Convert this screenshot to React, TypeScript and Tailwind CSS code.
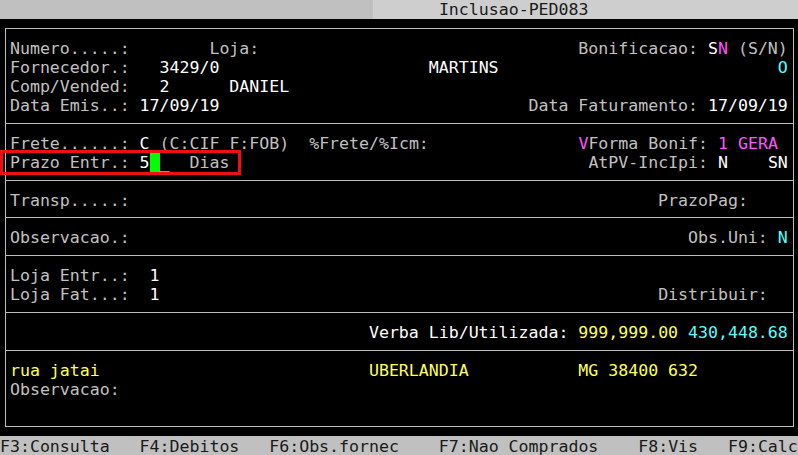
import React from "react";

type Seg = { col: number; text: string; cls: string };

const L = "text-[#c0c0c0]";
const W = "text-white";
const M = "text-[#ff55ff]";
const C = "text-[#55ffff]";
const Y = "text-[#ffff55]";
const K = "text-[#1a1a1a]";

function build(segs: Seg[], start: number) {
  const out: React.ReactNode[] = [];
  let cur = start;
  segs.forEach((s, i) => {
    if (s.col > cur) {
      out.push(<span key={"s" + i}>{" ".repeat(s.col - cur)}</span>);
      cur = s.col;
    }
    out.push(
      <span key={"t" + i} className={s.cls}>
        {s.text}
      </span>
    );
    cur += s.text.length;
  });
  return out;
}

const rowCls =
  "h-[18.958px] leading-[22px] whitespace-pre text-[16.6px] tracking-[-0.019px] font-['DejaVu_Sans_Mono',monospace]";

function TextRow({ segs }: { segs: Seg[] }) {
  return <div className={rowCls + " pl-[4.475px]"}>{build(segs, 1)}</div>;
}

function Sep() {
  return (
    <div className="h-[18.958px] flex items-center">
      <div className="h-px w-full bg-[#bdbdbd]" />
    </div>
  );
}

const rows: (Seg[] | "sep")[] = [
  [
    { col: 1, text: "Numero.....:", cls: L },
    { col: 21, text: "Loja:", cls: L },
    { col: 58, text: "Bonificacao:", cls: L },
    { col: 71, text: "S", cls: W },
    { col: 72, text: "N", cls: M },
    { col: 74, text: "(S/N)", cls: L },
  ],
  [
    { col: 1, text: "Fornecedor.:", cls: L },
    { col: 16, text: "3429/0", cls: W },
    { col: 43, text: "MARTINS", cls: W },
    { col: 78, text: "O", cls: C },
  ],
  [
    { col: 1, text: "Comp/Vended:", cls: L },
    { col: 16, text: "2", cls: W },
    { col: 23, text: "DANIEL", cls: W },
  ],
  [
    { col: 1, text: "Data Emis..:", cls: L },
    { col: 14, text: "17/09/19", cls: W },
    { col: 53, text: "Data Faturamento:", cls: L },
    { col: 71, text: "17/09/19", cls: W },
  ],
  "sep",
  [
    { col: 1, text: "Frete......:", cls: L },
    { col: 14, text: "C", cls: W },
    { col: 16, text: "(C:CIF F:FOB)", cls: L },
    { col: 31, text: "%Frete/%Icm:", cls: L },
    { col: 58, text: "V", cls: M },
    { col: 59, text: "Forma Bonif:", cls: L },
    { col: 72, text: "1 GERA", cls: M },
  ],
  [
    { col: 1, text: "Prazo Entr.:", cls: L },
    { col: 14, text: "5", cls: W },
    { col: 15, text: " ", cls: "bg-[#00ff00]" },
    { col: 16, text: "_", cls: W },
    { col: 19, text: "Dias", cls: L },
    { col: 59, text: "AtPV-IncIpi:", cls: L },
    { col: 72, text: "N", cls: W },
    { col: 77, text: "SN", cls: W },
  ],
  "sep",
  [
    { col: 1, text: "Transp.....:", cls: L },
    { col: 66, text: "PrazoPag:", cls: L },
  ],
  "sep",
  [
    { col: 1, text: "Observacao.:", cls: L },
    { col: 69, text: "Obs.Uni:", cls: L },
    { col: 78, text: "N", cls: C },
  ],
  "sep",
  [
    { col: 1, text: "Loja Entr..:", cls: L },
    { col: 15, text: "1", cls: W },
  ],
  [
    { col: 1, text: "Loja Fat...:", cls: L },
    { col: 15, text: "1", cls: W },
    { col: 66, text: "Distribuir:", cls: L },
  ],
  "sep",
  [
    { col: 37, text: "Verba Lib/Utilizada:", cls: W },
    { col: 58, text: "999,999.00", cls: Y },
    { col: 69, text: "430,448.68", cls: C },
  ],
  "sep",
  [
    { col: 1, text: "rua jatai", cls: Y },
    { col: 37, text: "UBERLANDIA", cls: Y },
    { col: 58, text: "MG 38400 632", cls: Y },
  ],
  [{ col: 1, text: "Observacao:", cls: L }],
  [],
];

const fkeys: Seg[] = [
  { col: 0, text: "F3:Consulta", cls: K },
  { col: 14, text: "F4:Debitos", cls: K },
  { col: 27, text: "F6:Obs.fornec", cls: K },
  { col: 44, text: "F7:Nao Comprados", cls: K },
  { col: 64, text: "F8:Vis", cls: K },
  { col: 73, text: "F9:Calc", cls: K },
];

export default function App() {
  return (
    <div className="relative w-[798px] h-[455px] overflow-hidden bg-black flex flex-col">
      {/* title bar */}
      <div className="h-[18.958px] flex shrink-0 overflow-hidden">
        <div className="w-[373px] bg-[#c0c0c0]" />
        <div className={"flex-1 bg-[#cecece] pl-[65.9px] !leading-[19px] " + rowCls + " " + K}>
          Inclusao-PED083
        </div>
      </div>

      {/* terminal body */}
      <div className="h-[417.08px] shrink-0 pt-[9.48px] pl-[4.5px]">
        <div className="w-[789px] h-[398.16px] border border-[#bdbdbd] pt-[8.5px]">
          {rows.map((r, i) =>
            r === "sep" ? <Sep key={i} /> : <TextRow key={i} segs={r} />
          )}
        </div>
      </div>

      {/* function keys */}
      <div className={"shrink-0 bg-[#c0c0c0] " + rowCls}>{build(fkeys, 0)}</div>

      {/* red annotation box */}
      <div className="absolute left-0 top-[150px] w-[241px] h-[25px] border-[3px] border-[#ee1111]" />
    </div>
  );
}
